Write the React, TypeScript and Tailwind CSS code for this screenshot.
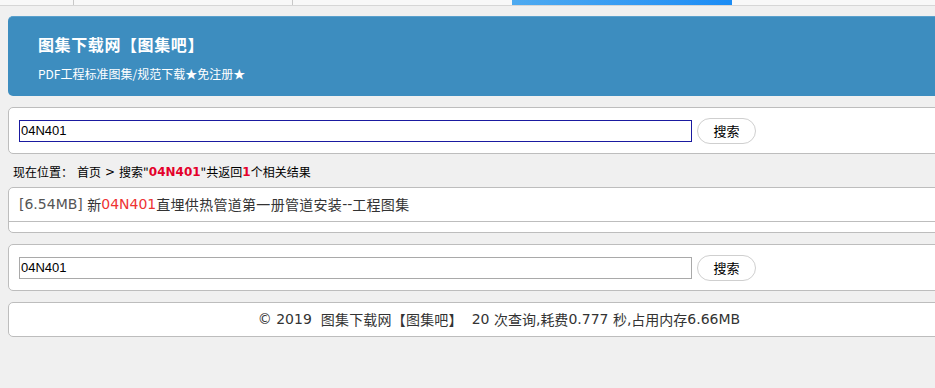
import React from "react";

function SearchCard({ focused }: { focused?: boolean }) {
  return (
    <div className="h-[47px] bg-white border border-[#bdbdbd] rounded-[5px] flex items-center pl-[10px]">
      <input
        readOnly
        value="04N401"
        className={
          focused
            ? "w-[673px] h-[22px] px-[1px] font-['Liberation_Sans',Arial,sans-serif] text-[13px] text-black bg-white outline-none border border-[#1a1aa0]"
            : "w-[673px] h-[22px] px-[1px] font-['Liberation_Sans',Arial,sans-serif] text-[13px] text-black bg-white outline-none border border-[#a9a9a9]"
        }
      />
      <button className="ml-[5px] w-[59px] h-[26px] rounded-full border border-[#cfcfcf] bg-white font-['Noto_Sans_CJK_SC',sans-serif] text-[13px] text-black flex items-center justify-center">
        搜索
      </button>
    </div>
  );
}

export default function App() {
  return (
    <div className="w-full h-[388px] bg-[#f0f0f0] overflow-hidden font-['DejaVu_Sans','Noto_Sans_CJK_SC',sans-serif]">
      <div className="h-[6px] bg-[#f8f8f8] border-b border-[#d6d6d6] flex">
        <div className="w-[74px] border-r border-[#c8c8c8]" />
        <div className="w-[219px] border-r border-[#c8c8c8]" />
        <div className="w-[219px]" />
        <div className="w-[220px] bg-gradient-to-r from-[#4eaaf0] to-[#1a8cf5]" />
        <div className="flex-1" />
      </div>
      <div className="ml-[8px] w-[982px]">
        <div className="mt-[10px] h-[80px] rounded-[5px] bg-[#3d8dbf] border-t border-[#5aa0cc] pl-[30px] text-white flex flex-col font-['Noto_Sans_CJK_SC',sans-serif]">
          <div className="mt-[17px] text-[16px] font-bold leading-[20px] tracking-[0.6px]">图集下载网【图集吧】</div>
          <div className="mt-[12px] text-[12px] leading-[16px]">PDF工程标准图集/规范下载★免注册★</div>
        </div>
        <div className="mt-[11px]">
          <SearchCard focused />
        </div>
        <div className="h-[33px] flex items-center pl-[5px] pt-[2px] text-[12px] text-black font-['Noto_Sans_CJK_SC',sans-serif]">
          <span>现在位置：</span>
          <span className="ml-[4px]">首页</span>
          <span className="mx-[4px] font-['DejaVu_Sans',sans-serif]">&gt;</span>
          <span>搜索"</span>
          <span className="text-[#e4002b] font-bold font-['DejaVu_Sans',sans-serif]">04N401</span>
          <span>"共返回</span>
          <span className="text-[#e4002b] font-bold font-['DejaVu_Sans',sans-serif]">1</span>
          <span>个相关结果</span>
        </div>
        <div className="h-[46px] bg-white border border-[#bdbdbd] rounded-[5px] flex flex-col">
          <div className="h-[34px] border-b border-[#bdbdbd] flex items-center pl-[10px] text-[14px] text-[#333]">
            <span className="text-[#555]">[6.54MB]</span>&nbsp;<span className="font-['Noto_Sans_CJK_SC',sans-serif]">新</span>
            <span className="text-[#ee3333]">04N401</span>
            <span className="font-['Noto_Sans_CJK_SC',sans-serif] tracking-[0.3px]">直埋供热管道第一册管道安装</span>--<span className="font-['Noto_Sans_CJK_SC',sans-serif] tracking-[0.3px]">工程图集</span>
          </div>
        </div>
        <div className="mt-[11px]">
          <SearchCard />
        </div>
        <div className="mt-[11px] h-[35px] bg-white border border-[#bdbdbd] rounded-[5px] flex items-center justify-center text-[14px] text-[#333]">
          ©&nbsp;2019&nbsp;&nbsp;<span className="font-['Noto_Sans_CJK_SC',sans-serif] tracking-[0.2px]">图集下载网【图集吧】</span>&nbsp;&nbsp;20&nbsp;<span className="font-['Noto_Sans_CJK_SC',sans-serif]">次查询</span>,<span className="font-['Noto_Sans_CJK_SC',sans-serif]">耗费</span>0.777&nbsp;<span className="font-['Noto_Sans_CJK_SC',sans-serif]">秒</span>,<span className="font-['Noto_Sans_CJK_SC',sans-serif]">占用内存</span>6.66MB
        </div>
      </div>
    </div>
  );
}
